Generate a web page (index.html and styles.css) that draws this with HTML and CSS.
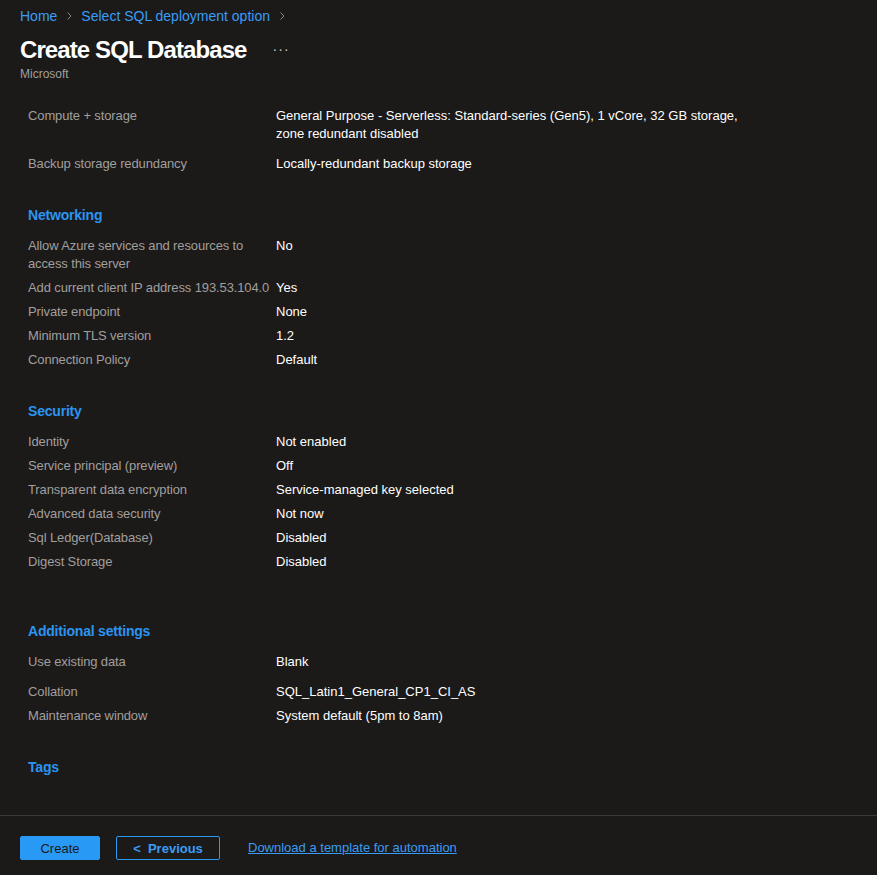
FILE: index.html
```html
<!DOCTYPE html>
<html lang="en">
<head>
<meta charset="utf-8">
<title>Create SQL Database</title>
<link rel="stylesheet" href="styles.css">
</head>
<body>
<div class="page">
  <header class="top">
    <nav class="crumbs">
      <a class="crumb" href="#">Home</a>
      <svg class="chev" width="12" height="12" viewBox="0 0 12 12"><path d="M4.5 2.5 L8 6 L4.5 9.5" fill="none" stroke="#8a8886" stroke-width="1"/></svg>
      <a class="crumb" href="#">Select SQL deployment option</a>
      <svg class="chev" width="12" height="12" viewBox="0 0 12 12"><path d="M4.5 2.5 L8 6 L4.5 9.5" fill="none" stroke="#8a8886" stroke-width="1"/></svg>
    </nav>
    <div class="title-row">
      <h1 class="title">Create SQL Database</h1>
      <span class="more">&middot;&middot;&middot;</span>
    </div>
    <div class="publisher">Microsoft</div>
  </header>

  <main class="content">
    <section class="group first">
      <div class="row"><div class="label">Compute + storage</div><div class="value">General Purpose - Serverless: Standard-series (Gen5), 1 vCore, 32 GB storage, zone redundant disabled</div></div>
      <div class="row tall"><div class="label">Backup storage redundancy</div><div class="value">Locally-redundant backup storage</div></div>
    </section>

    <section class="group">
      <h2 class="heading">Networking</h2>
      <div class="row"><div class="label">Allow Azure services and resources to access this server</div><div class="value">No</div></div>
      <div class="row"><div class="label">Add current client IP address 193.53.104.0</div><div class="value">Yes</div></div>
      <div class="row"><div class="label">Private endpoint</div><div class="value">None</div></div>
      <div class="row"><div class="label">Minimum TLS version</div><div class="value">1.2</div></div>
      <div class="row"><div class="label">Connection Policy</div><div class="value">Default</div></div>
    </section>

    <section class="group extra">
      <h2 class="heading">Security</h2>
      <div class="row"><div class="label">Identity</div><div class="value">Not enabled</div></div>
      <div class="row"><div class="label">Service principal (preview)</div><div class="value">Off</div></div>
      <div class="row"><div class="label">Transparent data encryption</div><div class="value">Service-managed key selected</div></div>
      <div class="row"><div class="label">Advanced data security</div><div class="value">Not now</div></div>
      <div class="row"><div class="label">Sql Ledger(Database)</div><div class="value">Disabled</div></div>
      <div class="row"><div class="label">Digest Storage</div><div class="value">Disabled</div></div>
    </section>

    <section class="group">
      <h2 class="heading">Additional settings</h2>
      <div class="row roomy"><div class="label">Use existing data</div><div class="value">Blank</div></div>
      <div class="row"><div class="label">Collation</div><div class="value">SQL_Latin1_General_CP1_CI_AS</div></div>
      <div class="row"><div class="label">Maintenance window</div><div class="value">System default (5pm to 8am)</div></div>
    </section>

    <section class="group">
      <h2 class="heading">Tags</h2>
    </section>
  </main>

  <footer class="footer">
    <button class="btn primary">Create</button>
    <button class="btn outline">&lt;&nbsp; Previous</button>
    <a class="dl" href="#">Download a template for automation</a>
  </footer>
</div>
</body>
</html>
```
FILE: styles.css
```css
html, body {
  margin: 0;
  padding: 0;
  background: #1b1a19;
  height: 100%;
}
body {
  font-family: "Liberation Sans", Arial, sans-serif;
  color: #ffffff;
  font-size: 13px;
}
.page {
  height: 875px;
  display: flex;
  flex-direction: column;
}
.top {
  padding: 7px 20px 0 20px;
}
.crumbs {
  display: flex;
  align-items: center;
  gap: 6px;
  height: 18px;
  font-size: 14px;
}
.crumb {
  color: #3a9cf5;
  text-decoration: none;
}
.chev {
  display: block;
}
.title-row {
  display: flex;
  align-items: center;
  margin-top: 10px;
  height: 30px;
}
.title {
  margin: 0;
  font-size: 24px;
  font-weight: 700;
  letter-spacing: -0.9px;
  color: #ffffff;
  line-height: 30px;
}
.more {
  margin-left: 26px;
  color: #c8c6c4;
  font-size: 14px;
  letter-spacing: 1px;
  line-height: 14px;
  padding-bottom: 2px;
}
.publisher {
  font-size: 12px;
  color: #a19f9d;
  line-height: 16px;
  margin-top: 1px;
}
.content {
  flex: 1;
  padding: 0 28px;
}
.group {
  display: flex;
  flex-direction: column;
  gap: 6px;
  margin-top: 33px;
}
.group.first {
  margin-top: 25px;
}
.group.extra + .group {
  margin-top: 51px;
}
.heading {
  margin: 0 0 7px 0;
  font-size: 14px;
  font-weight: 700;
  color: #2b94f0;
  line-height: 18px;
  letter-spacing: -0.2px;
}
.row {
  display: flex;
  line-height: 18px;
}
.row.tall {
  margin-top: 6px;
}
.row.roomy {
  margin-bottom: 6px;
}
.label {
  width: 248px;
  flex: none;
  color: #a19f9d;
  letter-spacing: -0.12px;
}
.value {
  max-width: 465px;
  color: #ffffff;
}
.footer {
  flex: none;
  height: 39px;
  border-top: 1px solid #3b3a39;
  display: flex;
  align-items: flex-start;
  padding: 20px 20px 0 20px;
}
.btn {
  font-family: "Liberation Sans", Arial, sans-serif;
  font-size: 13px;
  height: 24px;
  border-radius: 2px;
  padding: 0;
  cursor: pointer;
}
.primary {
  width: 80px;
  background: #2899f5;
  border: 1px solid #2899f5;
  color: #1b1a19;
}
.outline {
  width: 104px;
  margin-left: 16px;
  background: transparent;
  border: 1px solid #2899f5;
  color: #3a9cf5;
  font-weight: 700;
}
.dl {
  margin-left: 28px;
  color: #3a9cf5;
  font-size: 13px;
  line-height: 24px;
  text-decoration: underline;
}
```
